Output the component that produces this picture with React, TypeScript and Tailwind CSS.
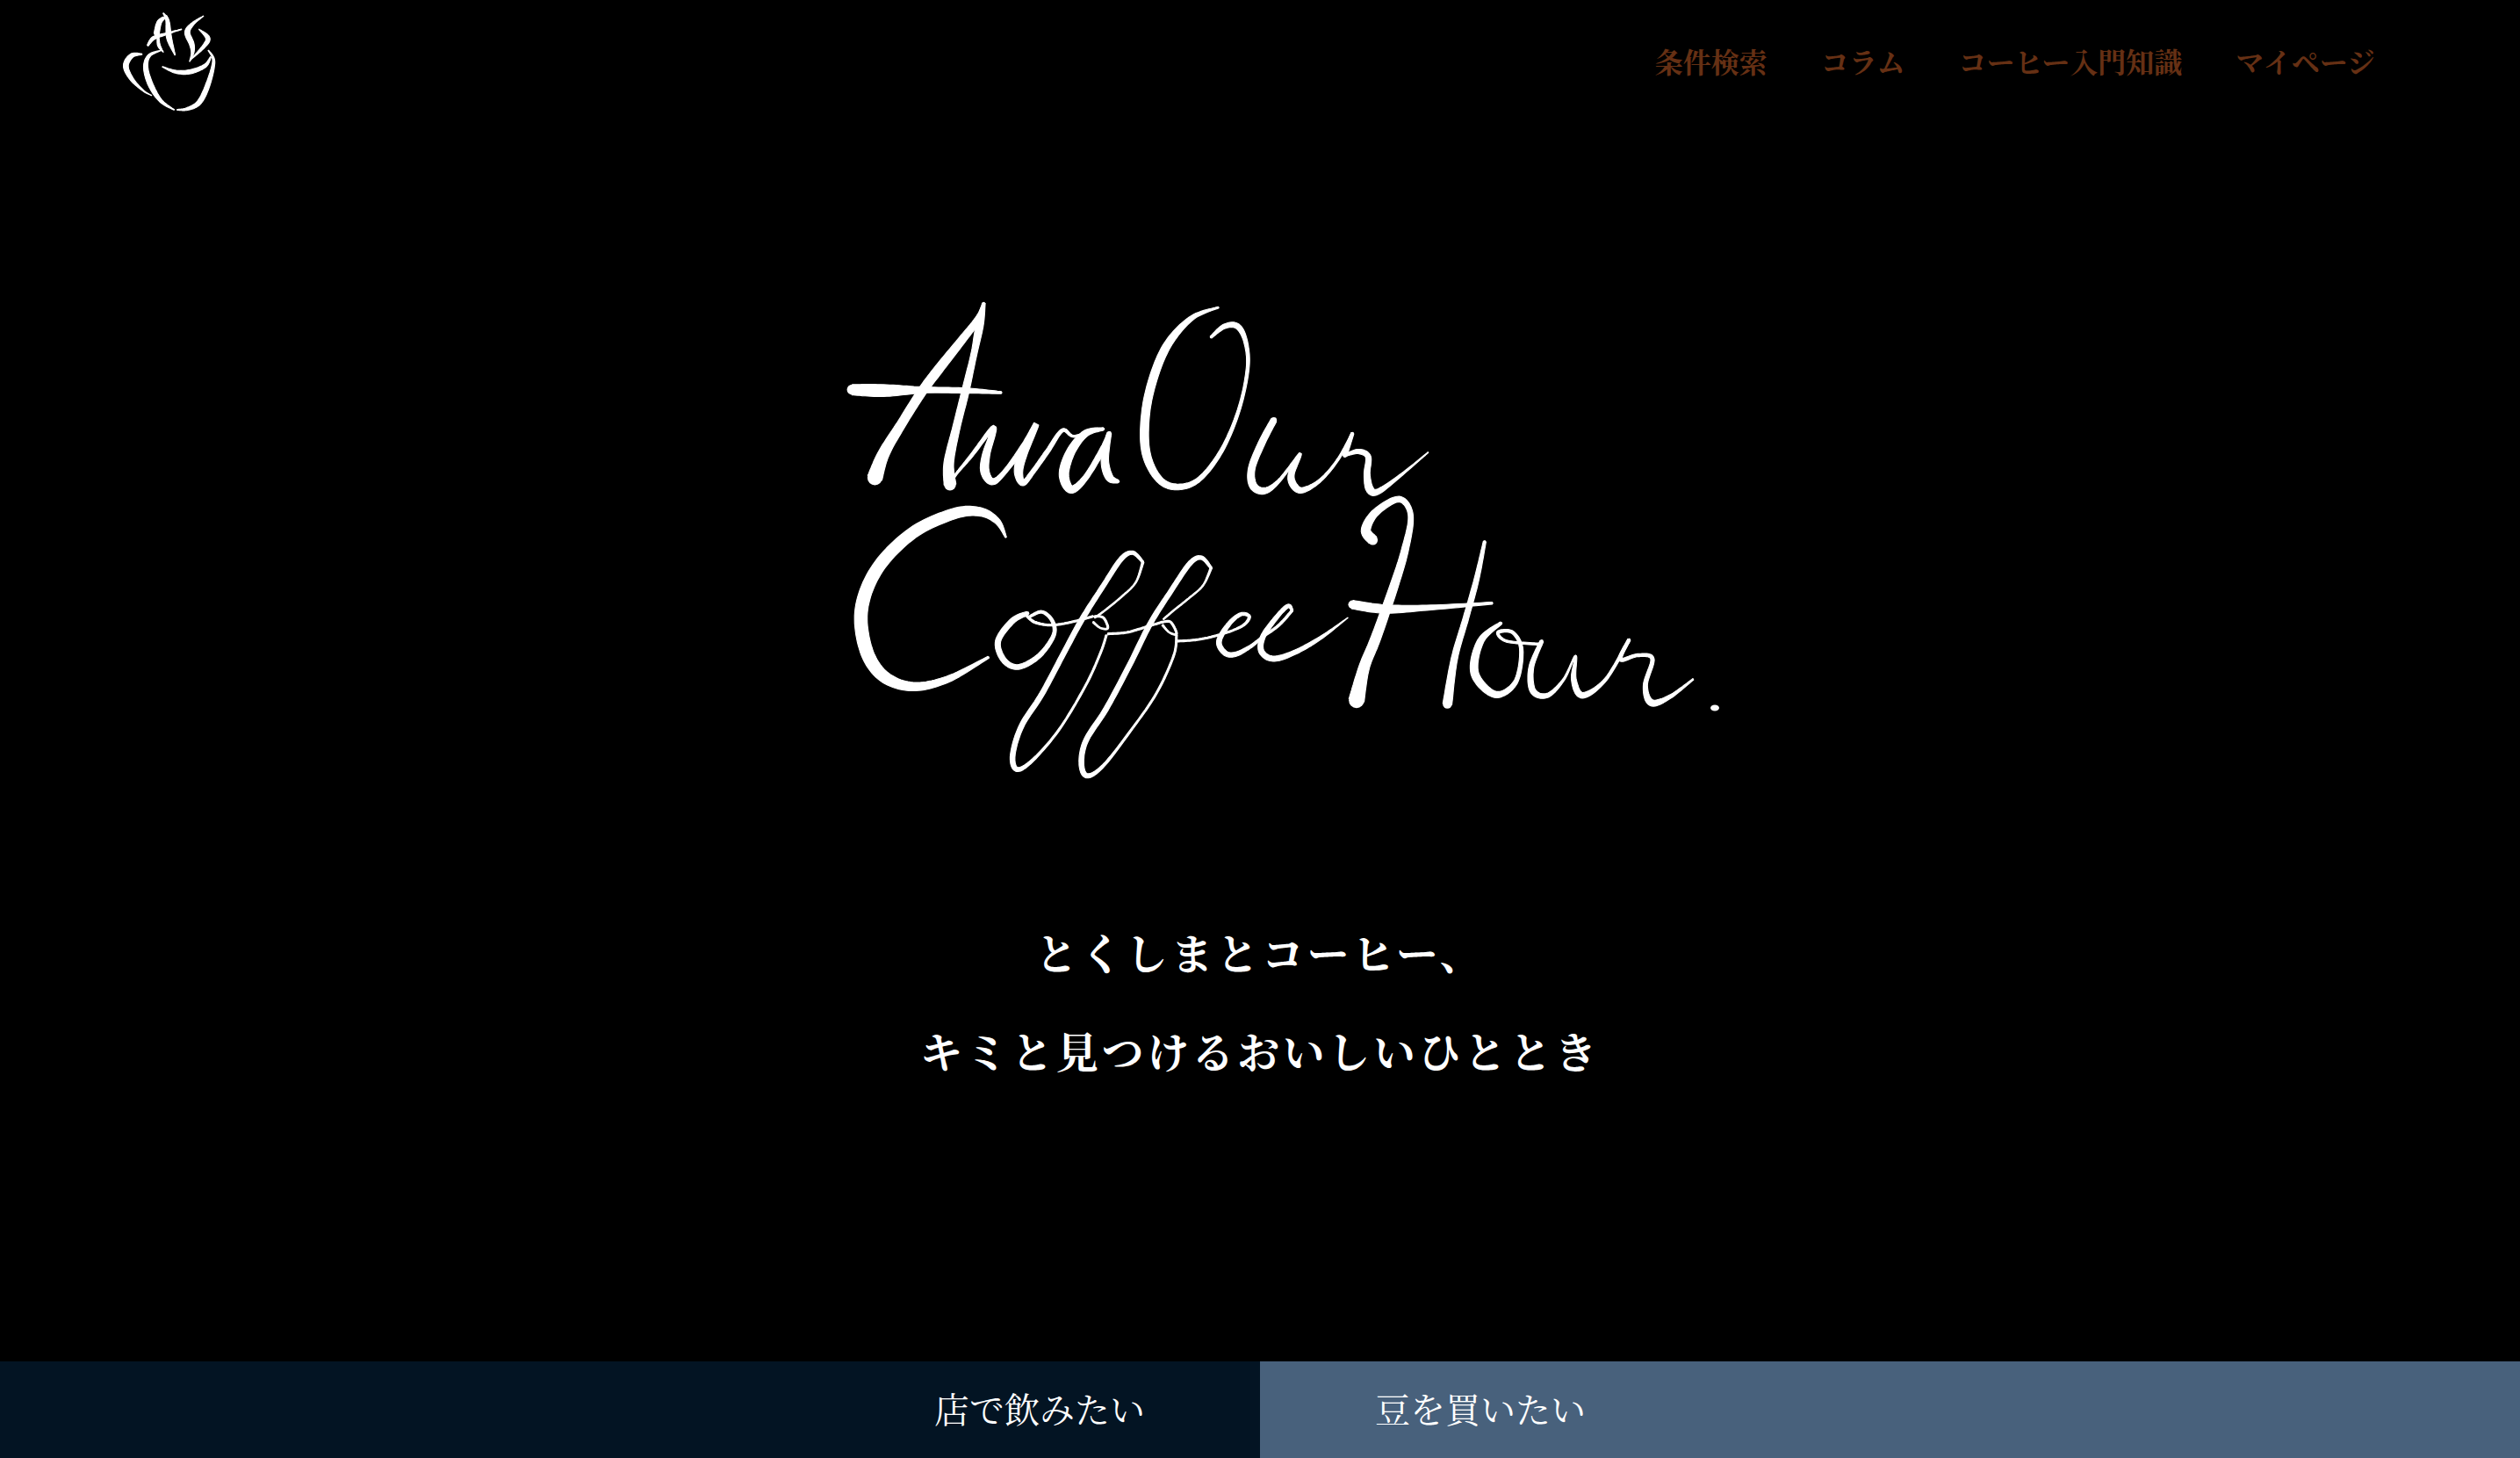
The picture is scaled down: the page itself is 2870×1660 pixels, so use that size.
import React from 'react';

type Pt = [number, number, number];

// Turns a list of [x, y, width] points into a filled pen stroke with varying width
function brushPath(pts: Pt[]) {
  const samples: Pt[] = [];
  for (let i = 0; i < pts.length - 1; i++) {
    const p0 = pts[Math.max(i - 1, 0)];
    const p1 = pts[i];
    const p2 = pts[i + 1];
    const p3 = pts[Math.min(i + 2, pts.length - 1)];
    for (let s = 0; s < 12; s++) {
      const t = s / 12;
      const at = (k: number) =>
        0.5 *
        (2 * p1[k] +
          (p2[k] - p0[k]) * t +
          (2 * p0[k] - 5 * p1[k] + 4 * p2[k] - p3[k]) * t * t +
          (3 * p1[k] - p0[k] - 3 * p2[k] + p3[k]) * t * t * t);
      samples.push([at(0), at(1), Math.max(at(2), 0.5)]);
    }
  }
  samples.push(pts[pts.length - 1]);
  const left: string[] = [];
  const right: string[] = [];
  samples.forEach((p, i) => {
    const a = samples[Math.max(i - 1, 0)];
    const b = samples[Math.min(i + 1, samples.length - 1)];
    const dx = b[0] - a[0];
    const dy = b[1] - a[1];
    const len = Math.hypot(dx, dy) || 1;
    const nx = (-dy / len) * (p[2] / 2);
    const ny = (dx / len) * (p[2] / 2);
    left.push(`${(p[0] + nx).toFixed(1)} ${(p[1] + ny).toFixed(1)}`);
    right.unshift(`${(p[0] - nx).toFixed(1)} ${(p[1] - ny).toFixed(1)}`);
  });
  return `M${left.join('L')}L${right.join('L')}Z`;
}

// Point lists were read off crops, so each group has its own origin and scale
function place(items: Pt[][], ox: number, oy: number, sx: number, sy: number, sw: number) {
  return items.map((pts) => pts.map(([x, y, w]): Pt => [ox + x * sx, oy + y * sy, w * sw]));
}

function Strokes({ items }: { items: Pt[][] }) {
  return (
    <>
      {items.map((pts, i) => {
        const first = pts[0];
        const last = pts[pts.length - 1];
        return (
          <g key={i} fill="#fff">
            <path d={brushPath(pts)} stroke="#fff" strokeWidth={1.1} strokeLinejoin="round" />
            <circle cx={first[0]} cy={first[1]} r={first[2] / 2} />
            <circle cx={last[0]} cy={last[1]} r={last[2] / 2} />
          </g>
        );
      })}
    </>
  );
}

const cupStrokes: Pt[][] = [
  [[185, 185, 3], [150, 190, 14], [130, 225, 17], [150, 270, 12], [190, 310, 4], [218, 326, 1]],
  [[250, 172, 2], [210, 190, 9], [198, 230, 15], [215, 290, 17], [250, 345, 10], [295, 375, 2]],
  [[255, 228, 2], [300, 245, 10], [350, 245, 14], [400, 225, 11], [420, 195, 3]],
  [[412, 172, 2], [430, 210, 8], [410, 290, 15], [380, 350, 15], [340, 372, 9], [305, 375, 2]],
  [[270, 55, 3], [245, 75, 15], [235, 115, 18]],
  [[205, 155, 5], [225, 130, 11], [270, 115, 6], [320, 100, 2]],
  [[258, 45, 2], [272, 70, 11], [278, 130, 17], [298, 188, 2]],
  [[240, 125, 6], [243, 155, 9], [258, 178, 1]],
  [[395, 55, 1], [360, 80, 9], [340, 110, 17], [355, 150, 16], [358, 180, 9], [348, 210, 1]],
  [[380, 100, 1], [410, 130, 14], [395, 160, 10], [350, 205, 1]],
];

const lineOne: Pt[][] = [
  [[272, 76, 2], [262, 130, 8], [235, 200, 10], [195, 300, 12], [165, 380, 12], [130, 490, 12], [100, 590, 15], [85, 672, 20]],
  [[272, 76, 4], [265, 150, 10], [255, 250, 8], [240, 380, 10], [225, 500, 10], [212, 620, 13], [214, 695, 16]],
  [[46, 371, 14], [100, 374, 16], [170, 372, 8], [240, 374, 7], [302, 381, 3]],
  [[675, 90, 2], [630, 125, 6], [590, 210, 10], [565, 320, 11], [550, 450, 11], [550, 580, 11], [570, 670, 9], [600, 703, 8], [640, 680, 6], [680, 580, 5], [710, 440, 4], [725, 300, 4], [722, 210, 5], [708, 155, 7], [685, 155, 6], [662, 192, 3]],
  [[770, 475, 8], [750, 550, 9], [732, 640, 9], [735, 700, 10], [755, 716, 8], [780, 680, 4], [815, 590, 3], [800, 660, 8], [805, 700, 9], [820, 714, 7], [850, 680, 4], [880, 610, 3], [905, 520, 3]],
  [[905, 520, 4], [892, 595, 6]],
  [[892, 595, 3], [915, 582, 6], [932, 600, 7], [930, 660, 8], [935, 712, 10], [950, 718, 7], [990, 660, 3], [1035, 585, 1]],
];

const wa: Pt[][] = [
  [[75, 195, 6], [90, 175, 4], [140, 115, 6], [215, 20, 8], [190, 110, 14], [185, 170, 16], [210, 205, 12], [250, 175, 8], [320, 80, 10], [360, 10, 10], [315, 110, 16], [300, 170, 16], [315, 210, 10], [350, 170, 8], [400, 100, 8], [450, 30, 6], [490, 50, 4], [570, 25, 4]],
  [[590, 25, 5], [530, 40, 12], [480, 100, 16], [455, 180, 18], [480, 232, 14], [530, 190, 10], [590, 90, 10], [610, 40, 8]],
  [[610, 40, 8], [595, 130, 14], [610, 190, 14], [640, 205, 6]],
];

const lineTwo: Pt[][] = [
  [[310, 155, 2], [295, 100, 8], [265, 68, 12], [220, 75, 15], [150, 140, 16], [90, 260, 17], [62, 400, 18], [70, 540, 18], [100, 630, 16], [150, 665, 12], [210, 640, 9], [280, 565, 3]],
  [[940, 165, 14], [928, 130, 13], [945, 70, 10], [985, 25, 8], [1005, 80, 7], [995, 200, 10], [975, 330, 12], [945, 500, 14], [925, 600, 15], [912, 712, 22]],
  [[905, 385, 12], [960, 400, 12], [1040, 395, 7], [1145, 380, 3]],
  [[1132, 170, 4], [1118, 300, 7], [1100, 430, 8], [1080, 570, 9], [1068, 725, 13]],
  [[1160, 448, 4], [1125, 510, 9], [1115, 620, 11], [1150, 692, 9], [1185, 650, 6], [1195, 540, 5], [1180, 480, 4], [1155, 480, 4], [1170, 510, 3], [1225, 520, 3]],
  [[1230, 510, 5], [1212, 600, 7], [1215, 680, 8], [1240, 695, 6], [1268, 640, 3], [1288, 560, 2], [1285, 640, 7], [1300, 695, 8], [1340, 640, 4], [1380, 505, 4]],
  [[1380, 505, 4], [1365, 572, 5], [1395, 558, 4], [1420, 570, 5], [1408, 660, 6], [1418, 720, 9], [1450, 700, 5], [1490, 640, 2]],
];

const offee: Pt[][] = [
  [[160, 305, 5], [200, 290, 6], [235, 320, 7], [240, 370, 8], [190, 440, 10], [120, 478, 11], [70, 455, 12], [50, 390, 12], [100, 320, 12], [150, 295, 9]],
  [[145, 300, 5], [175, 325, 5], [230, 335, 4], [300, 325, 4], [375, 305, 4]],
  [[545, 120, 5], [510, 88, 8], [470, 110, 10], [410, 200, 10], [340, 310, 11], [280, 420, 11], [200, 570, 11], [130, 680, 11], [100, 780, 11], [115, 828, 10], [170, 795, 6], [260, 690, 4], [350, 540, 4], [400, 430, 4], [420, 370, 4]],
  [[545, 120, 5], [520, 190, 3], [470, 240, 3], [415, 285, 3], [380, 310, 3]],
  [[380, 305, 4], [410, 310, 4], [425, 345, 4], [400, 345, 3], [375, 325, 4]],
  [[425, 365, 4], [490, 360, 4], [560, 340, 4], [610, 325, 4]],
  [[778, 140, 5], [745, 105, 8], [705, 125, 10], [640, 220, 10], [570, 330, 11], [500, 470, 11], [420, 620, 11], [350, 730, 11], [335, 810, 11], [355, 850, 10], [410, 815, 6], [500, 700, 4], [590, 570, 4], [650, 440, 4], [660, 370, 4]],
  [[778, 140, 5], [750, 200, 3], [700, 245, 3], [650, 285, 3], [615, 315, 3]],
  [[610, 325, 4], [640, 325, 4], [660, 365, 4], [635, 360, 3], [612, 335, 4]],
  [[660, 390, 4], [730, 385, 4], [800, 370, 4], [860, 350, 4], [895, 330, 5], [908, 305, 6], [880, 298, 7], [840, 330, 9], [805, 390, 11], [825, 430, 11], [860, 435, 10], [910, 410, 7], [955, 375, 5], [1010, 335, 5], [1055, 285, 5]],
  [[1055, 285, 5], [1040, 270, 8], [1000, 310, 9], [955, 375, 11], [950, 425, 12], [990, 450, 12], [1060, 430, 10], [1150, 380, 7], [1245, 310, 1]],
];

const navItems = ['条件検索', 'コラム', 'コーヒー入門知識', 'マイページ'];

export default function App() {
  return (
    <div className="min-h-screen flex flex-col bg-black text-white font-['Liberation_Serif','Noto_Serif_CJK_JP',serif]">
      <header className="h-[140px] flex items-center justify-between pl-[140px] pr-[165px]">
        <svg width="106" height="115" viewBox="140 13 106 115" aria-label="AG">
          <Strokes items={place(cupStrokes, 100, 0, 1 / 3, 1 / 3, 1 / 3)} />
        </svg>
        <nav className="flex gap-[61px] pt-[3px] text-[32px] font-bold text-[#663014]">
          {navItems.map((item) => (
            <a key={item} href="#">
              {item}
            </a>
          ))}
        </nav>
      </header>

      <main className="flex-1 flex flex-col items-center">
        <div className="mt-[190px] pl-[50px]">
          <svg className="block" width="1020" height="570" viewBox="950 330 1020 570" aria-label="Awa Our Coffee Hour.">
            <Strokes items={place(lineOne, 940, 320, 0.6633, 1 / 3, 0.85)} />
            <Strokes items={place(wa, 1060, 480, 1 / 3, 1 / 3, 0.6)} />
            <Strokes items={place(lineTwo, 940, 560, 0.6633, 1 / 3, 0.8)} />
            <Strokes items={place(offee, 1120, 600, 1 / 3, 1 / 3, 0.5)} />
            <ellipse cx="1953" cy="806" rx="5" ry="3.5" fill="#fff" />
          </svg>
        </div>
        <div className="mt-[132px] text-center text-[48px] font-bold leading-[112px] tracking-[3.6px]">
          <p>とくしまとコーヒー、</p>
          <p>キミと見つけるおいしいひととき</p>
        </div>
      </main>

      <div className="grid grid-cols-2 h-[110px] text-[40px]">
        <a href="#" className="flex items-center justify-end pt-[4px] pr-[131px] bg-[#031423]">
          店で飲みたい
        </a>
        <a href="#" className="flex items-center pt-[4px] pl-[131px] bg-[#48617c]">
          豆を買いたい
        </a>
      </div>
    </div>
  );
}
